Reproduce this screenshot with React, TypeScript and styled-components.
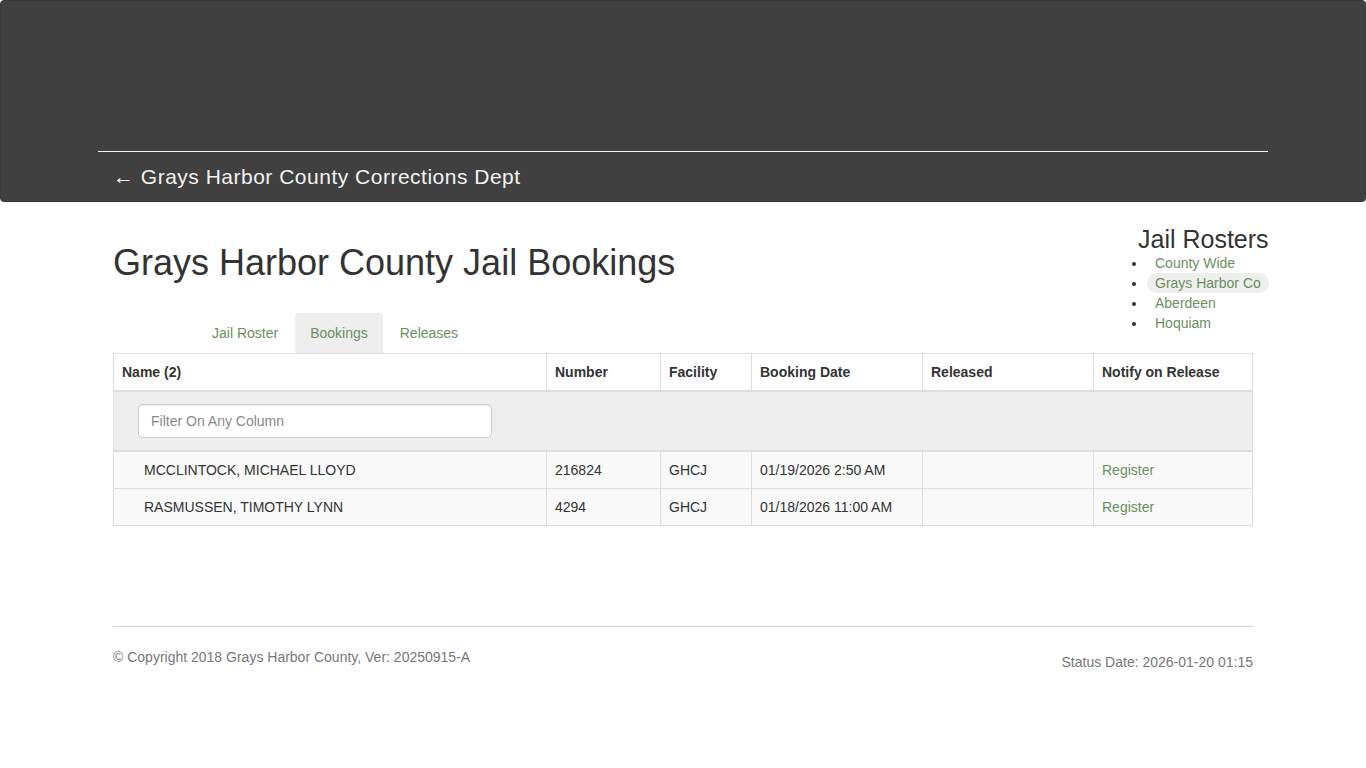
import styled, { createGlobalStyle } from "styled-components";

const GlobalStyle = createGlobalStyle`
    * {
        box-sizing: border-box;
    }
    body {
        margin: 0;
        background: #fff;
        color: #333;
        font-family: "Liberation Sans", Arial, sans-serif;
        font-size: 14px;
        line-height: 20px;
    }
`;

const Header = styled.header`
    height: 202px;
    background-color: #404040;
    border: 1px solid #3a3a3a;
    border-radius: 4px;
    display: flex;
    flex-direction: column;
    justify-content: flex-end;
`;

const HeaderInner = styled.div`
    width: 1170px;
    margin: 0 auto;
`;

const HeaderRule = styled.hr`
    margin: 0;
    border: 0;
    border-top: 1px solid #f2f2f2;
`;

const Brand = styled.a`
    display: block;
    height: 49px;
    line-height: 50px;
    padding: 0 15px;
    color: #f3f3f3;
    font-size: 21px;
    letter-spacing: 0.5px;
    text-decoration: none;
`;

const Container = styled.main`
    width: 1170px;
    margin: 0 auto;
    padding: 0 15px;
`;

const Top = styled.div`
    display: flex;
    justify-content: space-between;
    align-items: flex-start;
`;

const TitleCol = styled.div`
    padding-top: 41px;
`;

const Title = styled.h1`
    margin: 0 0 30px;
    font-size: 36px;
    font-weight: 500;
    line-height: 40px;
    color: #333;
`;

const Tabs = styled.ul`
    display: flex;
    list-style: none;
    margin: 0;
    padding: 0 0 0 84px;
`;

const Tab = styled.li<{ $active?: boolean }>`
    margin-right: 2px;
    a {
        display: block;
        padding: 10px 15px;
        border-radius: 4px 4px 0 0;
        color: #6b8f5e;
        text-decoration: none;
        background: ${(p) => (p.$active ? "#eee" : "transparent")};
    }
`;

const Sidebar = styled.aside`
    margin-top: 23px;
    margin-right: -15px;
    width: 130px;
`;

const SideTitle = styled.h3`
    margin: 0;
    font-size: 25px;
    font-weight: 500;
    line-height: 28px;
    white-space: nowrap;
`;

const RosterList = styled.ul`
    margin: 0;
    padding-left: 9px;
    white-space: nowrap;
`;

const RosterItem = styled.li<{ $active?: boolean }>`
    line-height: 20px;
    a {
        display: inline-block;
        padding: 0 8px;
        border-radius: 10px;
        color: #6b8f5e;
        text-decoration: none;
        background: ${(p) => (p.$active ? "#eee" : "transparent")};
    }
`;

const Table = styled.table`
    width: 1140px;
    border-collapse: collapse;
    border: 1px solid #ddd;
    table-layout: fixed;
`;

const Th = styled.th`
    padding: 8px;
    text-align: left;
    font-weight: bold;
    border: 1px solid #ddd;
    border-bottom: 2px solid #ddd;
    color: #333;
`;

const FilterCell = styled.th`
    padding: 12px 24px 12px;
    background: #eee;
    border-bottom: 2px solid #ddd;
    text-align: left;
`;

const FilterInput = styled.input`
    width: 354px;
    height: 34px;
    padding: 6px 12px;
    font-family: inherit;
    font-size: 14px;
    color: #555;
    background: #fff;
    border: 1px solid #ccc;
    border-radius: 4px;
    box-shadow: inset 0 1px 1px rgba(0, 0, 0, 0.075);
    &::placeholder {
        color: #888;
    }
`;

const Row = styled.tr`
    background: #f9f9f9;
`;

const Td = styled.td<{ $indent?: boolean }>`
    padding: 8px 8px 8px ${(p) => (p.$indent ? "30px" : "8px")};
    border: 1px solid #ddd;
    color: #333;
    a {
        color: #6b8f5e;
        text-decoration: none;
    }
`;

const FooterRule = styled.hr`
    margin: 100px 0 20px;
    border: 0;
    border-top: 1px solid #d6d6d6;
`;

const Footer = styled.footer`
    display: flex;
    justify-content: space-between;
    align-items: flex-start;
    color: #777;
`;

const Status = styled.span`
    padding-top: 5px;
`;

interface IBooking {
    name: string;
    number: string;
    facility: string;
    booked: string;
    released: string;
}

const bookings: IBooking[] = [
    { name: "MCCLINTOCK, MICHAEL LLOYD", number: "216824", facility: "GHCJ", booked: "01/19/2026 2:50 AM", released: "" },
    { name: "RASMUSSEN, TIMOTHY LYNN", number: "4294", facility: "GHCJ", booked: "01/18/2026 11:00 AM", released: "" },
];

const rosters = ["County Wide", "Grays Harbor Co", "Aberdeen", "Hoquiam"];

export default function App() {
    return (
        <>
            <GlobalStyle />
            <Header>
                <HeaderInner>
                    <HeaderRule />
                    <Brand href="#">← Grays Harbor County Corrections Dept</Brand>
                </HeaderInner>
            </Header>
            <Container>
                <Top>
                    <TitleCol>
                        <Title>Grays Harbor County Jail Bookings</Title>
                        <Tabs>
                            <Tab><a href="#">Jail Roster</a></Tab>
                            <Tab $active><a href="#">Bookings</a></Tab>
                            <Tab><a href="#">Releases</a></Tab>
                        </Tabs>
                    </TitleCol>
                    <Sidebar>
                        <SideTitle>Jail Rosters</SideTitle>
                        <RosterList>
                            {rosters.map((r) => (
                                <RosterItem key={r} $active={r === "Grays Harbor Co"}>
                                    <a href="#">{r}</a>
                                </RosterItem>
                            ))}
                        </RosterList>
                    </Sidebar>
                </Top>
                <Table>
                    <colgroup>
                        <col style={{ width: 433 }} />
                        <col style={{ width: 114 }} />
                        <col style={{ width: 91 }} />
                        <col style={{ width: 171 }} />
                        <col style={{ width: 171 }} />
                        <col style={{ width: 159 }} />
                    </colgroup>
                    <thead>
                        <tr>
                            <Th>Name (2)</Th>
                            <Th>Number</Th>
                            <Th>Facility</Th>
                            <Th>Booking Date</Th>
                            <Th>Released</Th>
                            <Th>Notify on Release</Th>
                        </tr>
                        <tr>
                            <FilterCell colSpan={6}>
                                <FilterInput placeholder="Filter On Any Column" />
                            </FilterCell>
                        </tr>
                    </thead>
                    <tbody>
                        {bookings.map((b) => (
                            <Row key={b.number}>
                                <Td $indent>{b.name}</Td>
                                <Td>{b.number}</Td>
                                <Td>{b.facility}</Td>
                                <Td>{b.booked}</Td>
                                <Td>{b.released}</Td>
                                <Td><a href="#">Register</a></Td>
                            </Row>
                        ))}
                    </tbody>
                </Table>
                <FooterRule />
                <Footer>
                    <span>© Copyright 2018 Grays Harbor County, Ver: 20250915-A</span>
                    <Status>Status Date: 2026-01-20 01:15</Status>
                </Footer>
            </Container>
        </>
    );
}
